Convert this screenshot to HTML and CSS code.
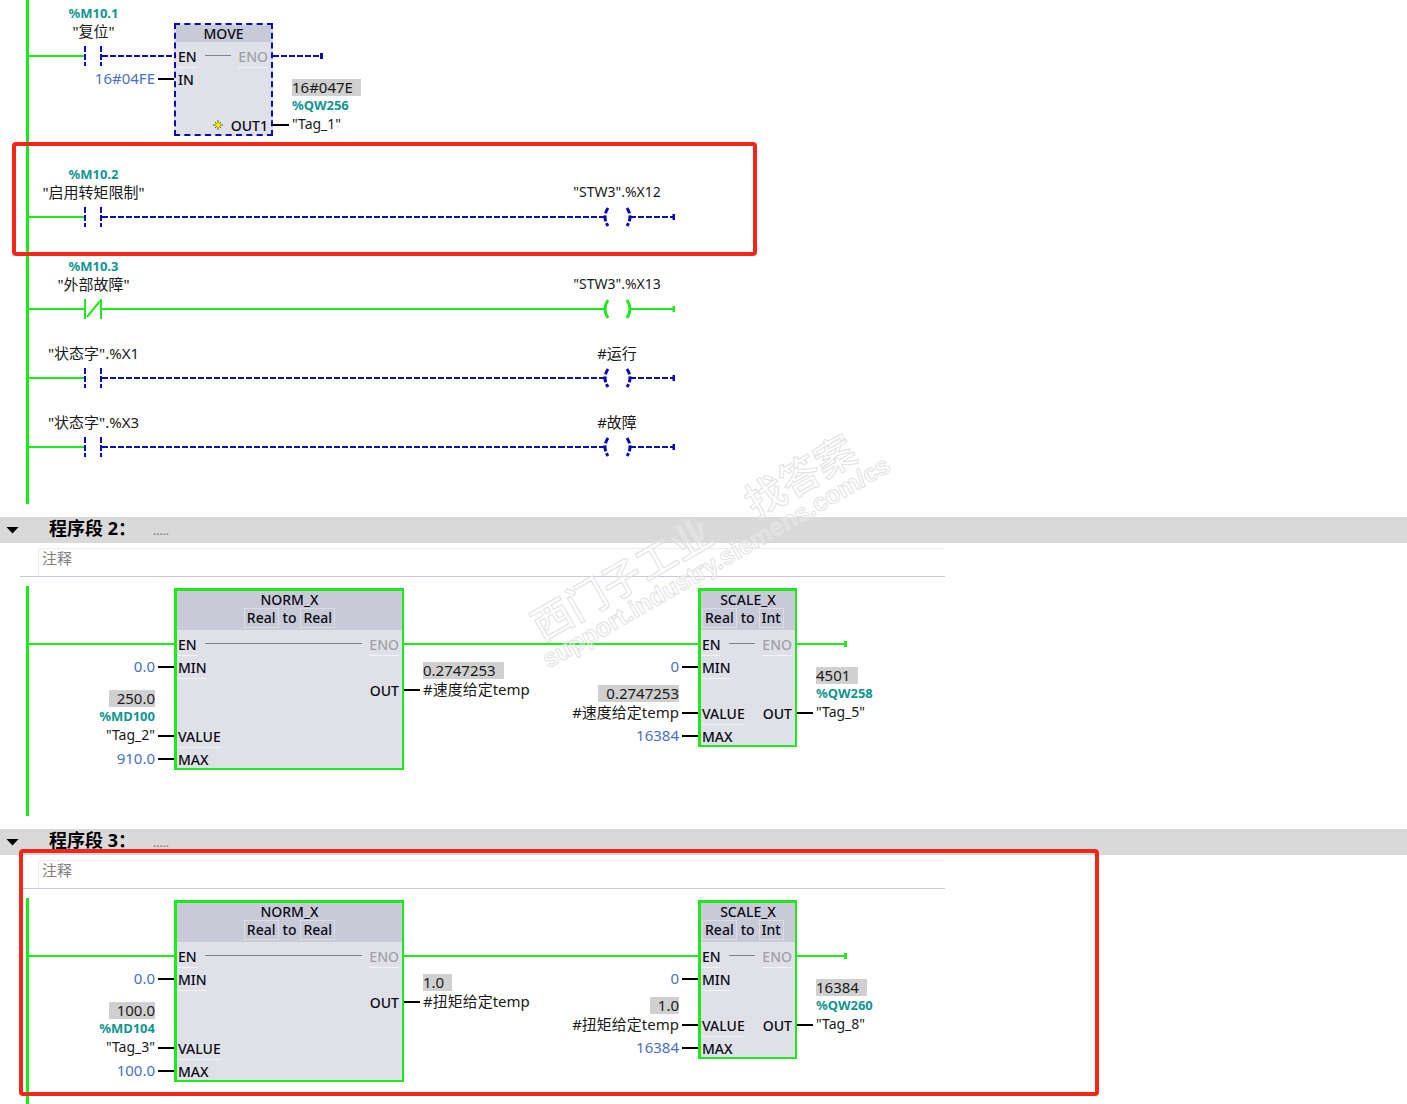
FILE: index.html
```html
<!DOCTYPE html>
<html lang="zh-CN">
<head>
    <meta charset="UTF-8">
    <meta name="viewport" content="width=device-width, initial-scale=1.0">
    <title>程序段</title>
    <link rel="stylesheet" href="styles.css">
</head>
<body>
    <!-- Shared ladder symbols -->
    <svg class="symbols" aria-hidden="true">
        <symbol id="contact" viewBox="0 0 129 20">
            <path class="live" d="M0 10H55"></path>
            <path d="M56 0V20M72 0V20M73 10H129"></path>
        </symbol>
        <symbol id="contact-nc" viewBox="0 0 129 20">
            <path d="M0 10H55M56 0V20M72 0V20M58 18L71 2M73 10H129"></path>
        </symbol>
        <symbol id="coil" viewBox="0 0 116 20">
            <path d="M0 10H45"></path>
            <path class="paren" d="M49 1Q43 10 49 19"></path>
            <path class="paren" d="M68 1Q74 10 68 19"></path>
            <path d="M71 10H115"></path>
            <path class="solid" d="M115 7V13"></path>
        </symbol>
    </svg>

    <main class="editor">
        <section class="network">
            <div class="ladder ladder-first">
                <div class="rung rung-move">
                    <div class="contact off">
                        <span class="address">%M10.1</span>
                        <span class="name">"复位"</span>
                        <svg class="contact-icon"><use href="#contact"></use></svg>
                    </div>
                    <div class="wire wire-lead off"></div>
                    <div class="operand input row-2">
                        <span class="constant">16#04FE</span>
                    </div>
                    <div class="block block-off">
                        <div class="block-head">
                            <div class="block-title">MOVE</div>
                        </div>
                        <div class="pins">
                            <div class="pin"><span class="label">EN</span><i class="link"></i><span class="label eno">ENO</span></div>
                            <div class="pin"><span>IN</span></div>
                            <div class="pin"></div>
                            <div class="pin pin-right">
                                <svg class="star" viewBox="0 0 10 10">
                                    <circle cx="5" cy="5" r="3" fill="#f4f414"></circle>
                                    <path d="M5 0V10M0 5H10M2 2L8 8M8 2L2 8" stroke="#5d6a10" stroke-width="1"></path>
                                    <circle cx="5" cy="5" r="2" fill="#f4f414"></circle>
                                </svg>
                                <span>OUT1</span>
                            </div>
                        </div>
                    </div>
                    <div class="wire wire-end off"></div>
                    <div class="operand output row-4">
                        <span class="value">16#047E</span>
                        <span class="address">%QW256</span>
                        <span class="tag">"Tag_1"</span>
                    </div>
                </div>

                <div class="rung rung-line rung-marked off">
                    <div class="contact">
                        <span class="address">%M10.2</span>
                        <span class="name">"启用转矩限制"</span>
                        <svg class="contact-icon"><use href="#contact"></use></svg>
                    </div>
                    <div class="wire wire-fill"></div>
                    <div class="coil">
                        <span class="tag">"STW3".%X12</span>
                        <svg class="coil-icon"><use href="#coil"></use></svg>
                    </div>
                    <div class="mark mark-rung"></div>
                </div>

                <div class="rung rung-line on">
                    <div class="contact">
                        <span class="address">%M10.3</span>
                        <span class="name">"外部故障"</span>
                        <svg class="contact-icon"><use href="#contact-nc"></use></svg>
                    </div>
                    <div class="wire wire-fill"></div>
                    <div class="coil">
                        <span class="tag">"STW3".%X13</span>
                        <svg class="coil-icon"><use href="#coil"></use></svg>
                    </div>
                </div>

                <div class="rung rung-line off">
                    <div class="contact">
                        <span class="name">"状态字".%X1</span>
                        <svg class="contact-icon"><use href="#contact"></use></svg>
                    </div>
                    <div class="wire wire-fill"></div>
                    <div class="coil">
                        <span class="name">#运行</span>
                        <svg class="coil-icon"><use href="#coil"></use></svg>
                    </div>
                </div>

                <div class="rung rung-line off">
                    <div class="contact">
                        <span class="name">"状态字".%X3</span>
                        <svg class="contact-icon"><use href="#contact"></use></svg>
                    </div>
                    <div class="wire wire-fill"></div>
                    <div class="coil">
                        <span class="name">#故障</span>
                        <svg class="coil-icon"><use href="#coil"></use></svg>
                    </div>
                </div>
            </div>
        </section>

        <section class="network">
            <header class="network-head">
                <button class="toggle" type="button" aria-label="折叠程序段 2"></button>
                <h2>程序段 2：</h2>
                <span class="dots">.....</span>
            </header>
            <div class="comment">
                <input type="text" placeholder="注释" aria-label="程序段 2 注释">
            </div>
            <div class="ladder">
                <div class="rung rung-convert">
                    <div class="wire wire-in on"></div>
                    <div class="operand input row-2"><span class="constant">0.0</span></div>
                    <div class="operand input row-5">
                        <span class="value">250.0</span>
                        <span class="address">%MD100</span>
                        <span class="tag">"Tag_2"</span>
                    </div>
                    <div class="operand input row-6"><span class="constant">910.0</span></div>

                    <div class="block block-norm">
                        <div class="block-head">
                            <div class="block-title">NORM_X</div>
                            <div class="types"><button type="button">Real</button><span>to</span><button type="button">Real</button></div>
                        </div>
                        <div class="pins">
                            <div class="pin"><span class="label">EN</span><i class="link"></i><span class="label eno">ENO</span></div>
                            <div class="pin"><span class="label">MIN</span></div>
                            <div class="pin pin-right"><span>OUT</span></div>
                            <div class="pin"></div>
                            <div class="pin"><span class="label">VALUE</span></div>
                            <div class="pin"><span>MAX</span></div>
                        </div>
                    </div>

                    <div class="wire wire-mid on"></div>
                    <div class="operand output mid row-3">
                        <span class="value">0.2747253</span>
                        <span class="name">#速度给定temp</span>
                    </div>
                    <div class="operand input mid row-2"><span class="constant">0</span></div>
                    <div class="operand input mid row-4">
                        <span class="value">0.2747253</span>
                        <span class="name">#速度给定temp</span>
                    </div>
                    <div class="operand input mid row-5"><span class="constant">16384</span></div>

                    <div class="block block-scale">
                        <div class="block-head">
                            <div class="block-title">SCALE_X</div>
                            <div class="types"><button type="button">Real</button><span>to</span><button type="button">Int</button></div>
                        </div>
                        <div class="pins">
                            <div class="pin"><span class="label">EN</span><i class="link"></i><span class="label eno">ENO</span></div>
                            <div class="pin"><span class="label">MIN</span></div>
                            <div class="pin"></div>
                            <div class="pin"><span class="label">VALUE</span><span>OUT</span></div>
                            <div class="pin"><span>MAX</span></div>
                        </div>
                    </div>

                    <div class="wire wire-end on"></div>
                    <div class="operand output last row-4">
                        <span class="value">4501</span>
                        <span class="address">%QW258</span>
                        <span class="tag">"Tag_5"</span>
                    </div>
                </div>
            </div>
        </section>

        <section class="network">
            <header class="network-head">
                <button class="toggle" type="button" aria-label="折叠程序段 3"></button>
                <h2>程序段 3：</h2>
                <span class="dots">.....</span>
            </header>
            <div class="comment">
                <input type="text" placeholder="注释" aria-label="程序段 3 注释">
            </div>
            <div class="ladder">
                <div class="rung rung-convert">
                    <div class="wire wire-in on"></div>
                    <div class="operand input row-2"><span class="constant">0.0</span></div>
                    <div class="operand input row-5">
                        <span class="value">100.0</span>
                        <span class="address">%MD104</span>
                        <span class="tag">"Tag_3"</span>
                    </div>
                    <div class="operand input row-6"><span class="constant">100.0</span></div>

                    <div class="block block-norm">
                        <div class="block-head">
                            <div class="block-title">NORM_X</div>
                            <div class="types"><button type="button">Real</button><span>to</span><button type="button">Real</button></div>
                        </div>
                        <div class="pins">
                            <div class="pin"><span class="label">EN</span><i class="link"></i><span class="label eno">ENO</span></div>
                            <div class="pin"><span class="label">MIN</span></div>
                            <div class="pin pin-right"><span>OUT</span></div>
                            <div class="pin"></div>
                            <div class="pin"><span class="label">VALUE</span></div>
                            <div class="pin"><span>MAX</span></div>
                        </div>
                    </div>

                    <div class="wire wire-mid on"></div>
                    <div class="operand output mid row-3">
                        <span class="value">1.0</span>
                        <span class="name">#扭矩给定temp</span>
                    </div>
                    <div class="operand input mid row-2"><span class="constant">0</span></div>
                    <div class="operand input mid row-4">
                        <span class="value">1.0</span>
                        <span class="name">#扭矩给定temp</span>
                    </div>
                    <div class="operand input mid row-5"><span class="constant">16384</span></div>

                    <div class="block block-scale">
                        <div class="block-head">
                            <div class="block-title">SCALE_X</div>
                            <div class="types"><button type="button">Real</button><span>to</span><button type="button">Int</button></div>
                        </div>
                        <div class="pins">
                            <div class="pin"><span class="label">EN</span><i class="link"></i><span class="label eno">ENO</span></div>
                            <div class="pin"><span class="label">MIN</span></div>
                            <div class="pin"></div>
                            <div class="pin"><span class="label">VALUE</span><span>OUT</span></div>
                            <div class="pin"><span>MAX</span></div>
                        </div>
                    </div>

                    <div class="wire wire-end on"></div>
                    <div class="operand output last row-4">
                        <span class="value">16384</span>
                        <span class="address">%QW260</span>
                        <span class="tag">"Tag_8"</span>
                    </div>
                </div>
            </div>
            <div class="mark mark-network"></div>
        </section>

        <svg class="watermark" viewBox="0 0 400 280">
            <g transform="rotate(-30 30 220)">
                <text class="wm-title" x="31" y="223">西门子工业</text>
                <text class="wm-title" x="277" y="223">找答案</text>
                <text class="wm-url" x="23" y="249">support.industry.siemens.com/cs</text>
            </g>
        </svg>
    </main>
</body>
</html>
```

FILE: styles.css
```css
* {
    box-sizing: border-box;
}

body {
    margin: 0;
    background: #fff;
    color: #1a1a1a;
    font-family: "Noto Sans", "Noto Sans CJK SC", sans-serif;
    font-size: 14px;
}

button,
input {
    font: inherit;
    color: inherit;
    margin: 0;
    padding: 0;
    border: none;
    background: none;
}

.symbols {
    display: none;
}

.editor {
    position: relative;
    height: 100vh;
    overflow: hidden;
}

.network {
    position: relative;
}

/* Network title bar */
.network-head {
    display: flex;
    align-items: center;
    height: 26px;
    padding-left: 6px;
    background: #d9d9d9;
}

.toggle {
    width: 13px;
    height: 7px;
    margin-right: 30px;
    background: #000;
    clip-path: polygon(0 0, 100% 0, 50% 100%);
    cursor: pointer;
}

.network-head h2 {
    width: 104px;
    margin: 0;
    padding-bottom: 4px;
    font-size: 18px;
    line-height: 22px;
    color: #000;
    white-space: nowrap;
}

.dots {
    font-size: 12px;
    color: #777;
}

.comment {
    display: flex;
    max-width: 925px;
    margin: 5px 0 9px 20px;
    padding-left: 18px;
    border-bottom: 1px solid #c9c9d9;
}

.comment input {
    flex: 1;
    height: 28px;
    padding: 0 3px 10px;
    border-top: 1px solid #ececf0;
    border-left: 1px solid #ececf0;
    font-size: 15px;
    line-height: 18px;
}

.comment input::placeholder {
    color: #808080;
    opacity: 1;
}

/* Power rail and rungs */
.ladder {
    margin-left: 26px;
    margin-bottom: 13px;
    padding-bottom: 20px;
    border-left: 3px solid #14ee14;
}

.ladder-first {
    padding-bottom: 22px;
}

.on {
    color: #1fe81f;
}

.off {
    color: #0a0ab8;
}

.rung {
    position: relative;
    margin-bottom: 25px;
}

.rung-move,
.rung-convert {
    display: grid;
    justify-content: start;
}

.rung-move {
    grid-template-columns: 145px 99px auto;
    grid-template-rows: 45px repeat(4, 23px);
    margin-bottom: 28px;
}

.rung-convert {
    grid-template-columns: 145px 230px 294px 99px auto;
    grid-template-rows: 45px repeat(6, 23px);
    padding-top: 2px;
}

.rung-line {
    display: flex;
    align-items: flex-end;
    max-width: 646px;
}

.rung-marked {
    margin-bottom: 30px;
}

.contact,
.coil {
    display: flex;
    flex-direction: column;
    align-items: center;
    line-height: 18px;
    white-space: nowrap;
}

.contact {
    width: 129px;
}

.coil {
    width: 116px;
}

.contact-icon,
.coil-icon {
    height: 20px;
    margin-top: 6px;
    fill: none;
    stroke: currentColor;
    stroke-width: 2px;
}

.contact-icon {
    width: 129px;
}

.coil-icon {
    width: 116px;
}

.off .contact-icon,
.off .coil-icon {
    stroke-dasharray: 6 2;
}

.paren {
    stroke-width: 3px;
}

.live {
    stroke: #1fe81f;
    stroke-dasharray: none;
}

.solid {
    stroke-width: 3px;
    stroke-dasharray: none;
}

.wire {
    height: 2px;
    background: currentColor;
}

.off.wire,
.off .wire {
    background: repeating-linear-gradient(90deg, currentColor 0 6px, transparent 6px 8px);
}

.wire-fill {
    flex: 1;
    margin-bottom: 9px;
}

.wire-lead,
.wire-in,
.wire-mid,
.wire-end {
    grid-row: 2;
    margin-top: 10px;
}

.wire-lead {
    grid-column: 1;
    justify-self: end;
    width: 16px;
}

.wire-in {
    grid-column: 1;
}

.wire-mid {
    grid-column: 3;
}

.wire-end {
    grid-column: -2;
    position: relative;
    width: 50px;
}

.wire-end::after {
    content: "";
    position: absolute;
    right: 0;
    top: -2px;
    width: 3px;
    height: 6px;
    background: currentColor;
}

.rung-move .contact {
    grid-area: 1 / 1 / 3 / 2;
    align-self: end;
    margin-bottom: 2px;
}

/* Operands beside the blocks */
.address {
    font-size: 13px;
    font-weight: 700;
    line-height: 18px;
    color: #0f9690;
}

.name {
    font-size: 15px;
    color: #1a1a1a;
}

.tag {
    color: #1a1a1a;
}

.constant {
    font-size: 15px;
    color: #4a70c4;
}

.value {
    font-size: 15px;
    line-height: 17px;
    background: #d0d0d0;
}

.operand {
    position: relative;
    display: flex;
    flex-direction: column;
    align-self: end;
    padding-bottom: 3px;
    line-height: 20px;
    white-space: nowrap;
}

.operand::after {
    content: "";
    position: absolute;
    bottom: 11px;
    width: 16px;
    height: 2px;
    background: #000;
}

.input {
    grid-column: 1;
    justify-self: end;
    align-items: flex-end;
    padding-right: 19px;
}

.input::after {
    right: 0;
}

.input .value {
    padding-left: 8px;
}

.output {
    grid-column: 3;
    justify-self: start;
    align-items: flex-start;
    padding-left: 19px;
}

.output::after {
    left: 0;
}

.output .value {
    padding-right: 8px;
}

.mid {
    grid-column: 3;
}

.last {
    grid-column: 5;
}

/* Operands grow upward from the row of their pin */
.row-2 { grid-row: 3; }
.row-3 { grid-row: 3 / 5; }
.row-4 { grid-row: 3 / 6; }
.row-5 { grid-row: 4 / 7; }
.row-6 { grid-row: 7; }

/* Instruction blocks */
.block {
    align-self: end;
    margin-bottom: 1px;
    border: 2px solid #1fe81f;
    border-top-width: 3px;
    border-left-width: 3px;
    background: #dfe0e8;
    color: #0a0a14;
    font-size: 14px;
    font-weight: 500;
}

.block-off {
    grid-area: 1 / 2 / 6 / 3;
    border: 2px dashed #0a0ab8;
}

.block-norm {
    grid-area: 1 / 2 / 8 / 3;
}

.block-scale {
    grid-area: 1 / 4 / 7 / 5;
}

.block-head {
    background: #c9cad8;
    text-align: center;
    line-height: 17px;
}

.types {
    display: flex;
    justify-content: center;
    gap: 4px;
    padding-bottom: 2px;
}

.block-scale .types {
    justify-content: flex-start;
    padding-left: 1px;
}

.types button {
    height: 20px;
    padding: 0 2px;
    border: 1px solid #dcdde6;
    line-height: 16px;
}

.types span {
    line-height: 20px;
}

.pins {
    padding-top: 3px;
}

.pin {
    display: flex;
    justify-content: space-between;
    height: 23px;
    padding: 0 3px 0 1px;
    line-height: 24px;
}

.pin:last-child {
    height: 20px;
}

.pin-right {
    justify-content: flex-end;
}

.label {
    height: 23px;
    border-bottom: 1px solid #f4f4f8;
}

.block-off .pin {
    padding-left: 2px;
}

.eno {
    color: #a0a0a6;
}

.link {
    flex: 1;
    height: 1px;
    margin: 10px 7px 0 8px;
    background: #808088;
}

.star {
    width: 10px;
    height: 10px;
    margin: 6px 8px 0 0;
    fill: none;
}

/* Red frames round the highlighted parts */
.mark {
    position: absolute;
    border: 4px solid #f4261a;
    border-radius: 4px;
    pointer-events: none;
}

.mark-rung {
    left: -17px;
    top: -23px;
    width: 745px;
    height: 114px;
}

.mark-network {
    left: 19px;
    top: 20px;
    width: 1080px;
    height: 247px;
}

.watermark {
    position: absolute;
    left: 510px;
    top: 420px;
    width: 400px;
    height: 280px;
    fill: #fff;
    fill-opacity: 0.3;
    stroke: #e2e2e2;
    stroke-width: 1px;
    pointer-events: none;
}

.wm-title {
    font-size: 40px;
    font-weight: 500;
    font-family: "Noto Sans CJK SC", sans-serif;
}

.wm-url {
    font-size: 25px;
    font-weight: 700;
    font-family: "Liberation Sans", sans-serif;
}
```
